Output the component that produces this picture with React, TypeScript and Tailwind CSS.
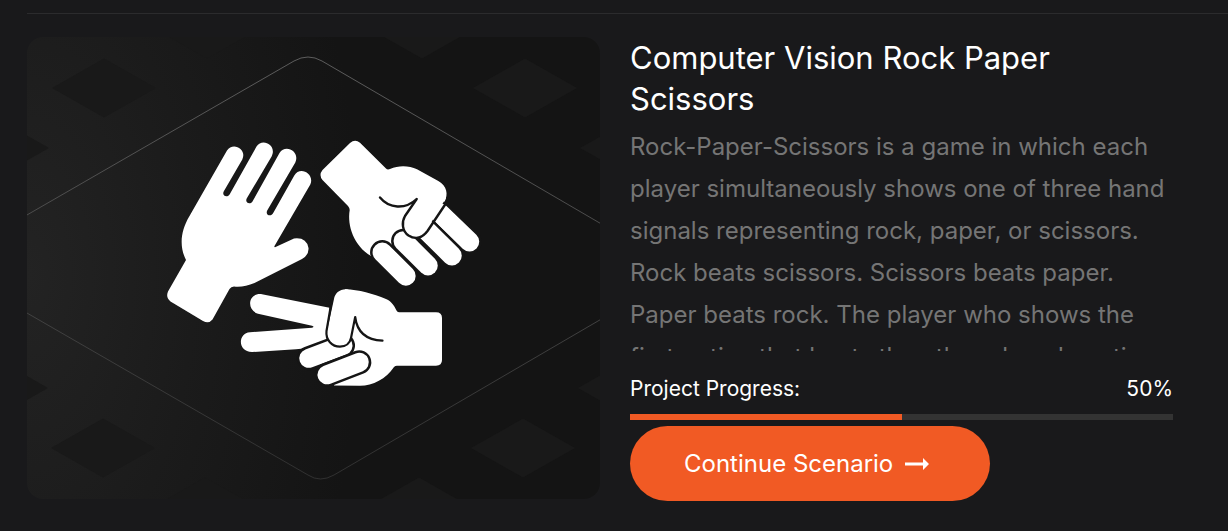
const DIAMONDS: [number, number][] = [
  [104, 88],
  [525, 88],
  [422, 29],
  [207, 29],
  [-3, 148],
  [632, 148],
  [103, 448],
  [523, 448],
  [419, 507],
  [205, 507],
  [-4, 388],
  [630, 388],
];

const INK = "#151515";

function Capsule({ d, width }: { d: string; width: number }) {
  return (
    <g fill="none" strokeLinecap="round">
      <path d={d} stroke={INK} strokeWidth={width + 5} />
      <path d={d} stroke="#fff" strokeWidth={width} />
    </g>
  );
}

function Paper() {
  return (
    <path
      fill="#fff"
      d="M186 260L168 291.500Q165.500 297.500 170.500 301.500L203 321Q209 324 212.500 319.500L229.500 289Q231 286.500 234 286.500Q244 287.500 254.500 283L302 259Q309 255 308.500 248Q306.500 237 294 238.500L275 247.200Q274 247 274.500 246L310.300 184.500C315 174 300 165.500 294.300 175.500L273.200 213C271 217.500 265 215 267.200 210.500L295.300 162.500C300.300 151.500 285.500 143.500 279.500 153L252.900 200.700C250.700 205.500 244.500 203 246.700 198.500L271.600 156.500C277.300 145.500 262.500 137.500 256.500 146.500L230 193.700C227.700 198.500 221.500 196 223.700 191.500L242.300 159.500C247.300 148.500 232.500 141.500 227 150.500L189.500 216C180 232 179.500 247 186 260Z"
    />
  );
}

function Rock() {
  return (
    <g>
      <path
        fill="#fff"
        d="M360 142.700L386 168.500Q387.500 170 390 169C399 165 409 165.500 417 169.300L438.300 181C447 186 448.500 194 444.500 202L426.700 232L400 256L371 256C354 246 347 226 349.700 210Q349.700 208 348 206L322.500 180Q318.500 175 322.500 170L350 143Q355 138.500 360 142.700Z"
      />
      <Capsule d="M439.700 213L469.500 241.700" width={19.5} />
      <Capsule d="M423 227L452 255.700" width={19.5} />
      <Capsule d="M403.300 241L428 265.700" width={19.5} />
      <Capsule d="M382.300 252.300L405.900 275.900" width={19.5} />
      <path
        fill="#fff"
        d="M446 198L426.700 230C422 238 415 239 409 235C402 231 401 222 405 216.500L416.700 199L430 185Z"
      />
      <path
        fill="none"
        stroke={INK}
        strokeWidth="2.400"
        strokeLinecap="round"
        strokeLinejoin="round"
        d="M445.500 204L427.500 231C422 238.500 415 239.500 408.500 235.500C402 231 401.500 222 405 216L416.700 199C405 210 389 208.500 380 197.500"
      />
    </g>
  );
}

function Scissors() {
  return (
    <g>
      <path
        fill="#fff"
        d="M262 294.200L329.500 307.700L327 341L306 347.500Q301 349 296 349.300L252 352C237.500 352 237.500 333 250 332.200L312 327.700Q315 327 312 325.700L258 313.800C246 310 248 292.500 262 294.200Z"
      />
      <path
        fill="#fff"
        d="M345 289.300C359 289.500 373 294 386 299C392 301.500 394.500 306.500 396.500 310.500Q397.200 312.200 399 312.200H436Q442 312.200 442 318V360Q442 365.700 436 365.700H397Q395.200 365.700 394 367C386 379 373 385.700 360 385.700L334 385.500L345 340L340 310Z"
      />
      <Capsule d="M308.800 358.300L343 345.500" width={19} />
      <Capsule d="M327 374.800L359.300 362.300" width={19} />
      <path
        fill="#fff"
        d="M348 289.400C340 288.500 335 293 334 299L327 331C325.500 340 332 346.500 340 346.500C346 346.500 350 343 351 338L355 316.700L366 300Z"
      />
      <path
        fill="none"
        stroke={INK}
        strokeWidth="2.200"
        strokeLinecap="round"
        strokeLinejoin="round"
        d="M332 299L326.500 331C325.500 340 332 346.700 340 346.700C346 346.700 350 343 351 338L355.200 317C357 332 366 340 382.500 340.700"
      />
    </g>
  );
}

function Artwork() {
  return (
    <svg
      viewBox="27 37 573 462"
      role="img"
      aria-label="Rock, paper and scissors hands"
      className="block w-full rounded-2xl"
    >
      <defs>
        <radialGradient
          id="glow"
          gradientUnits="userSpaceOnUse"
          cx="0"
          cy="0"
          r="1"
          gradientTransform="translate(27 275) scale(335 620)"
        >
          <stop offset="0" stopColor="#232323" />
          <stop offset="0.5" stopColor="#1b1b1b" />
          <stop offset="1" stopColor="#141414" />
        </radialGradient>
        <linearGradient id="edge" x1="0" y1="0" x2="0" y2="1">
          <stop offset="0" stopColor="#5c5c5c" />
          <stop offset="1" stopColor="#303030" />
        </linearGradient>
      </defs>
      <rect x="27" y="37" width="573" height="462" fill="url(#glow)" />
      {DIAMONDS.map(([x, y]) => (
        <path
          key={`${x},${y}`}
          d="M-52 0L0 -29.500L52 0L0 29.500Z"
          transform={`translate(${x} ${y})`}
          fill="#191919"
        />
      ))}
      <path
        fill="none"
        stroke="url(#edge)"
        d="M20 219L294 61Q308 53 322 61L610 229V314L334 475Q320 483 308 475L20 309"
      />
      <Paper />
      <Rock />
      <Scissors />
    </svg>
  );
}

export default function App() {
  const progress = 50;

  return (
    <main className="min-h-screen bg-[#19191b] pt-[13px] pl-[27px] font-['Inter',sans-serif] text-white">
      <hr className="border-t border-[#2b2b2d]" />
      <article className="grid grid-cols-[573fr_543fr] items-start gap-[30px] pt-[23px] pr-[55px] pb-[30px]">
        <Artwork />
        <div>
          <h2 className="text-[31px] leading-[41px]">Computer Vision Rock Paper Scissors</h2>
          <p className="mt-[7px] h-[225px] overflow-hidden text-[24px] leading-[42px] text-[#757575]">
            Rock-Paper-Scissors is a game in which each player simultaneously shows one of three hand
            signals representing rock, paper, or scissors. Rock beats scissors. Scissors beats paper.
            Paper beats rock. The player who shows the first option that beats the other player's
            option wins.
          </p>
          <div className="mt-[22px] flex justify-between text-[21px] leading-[32px]">
            <span id="progress-label">Project Progress:</span>
            <span>{progress}%</span>
          </div>
          <div
            role="progressbar"
            aria-labelledby="progress-label"
            aria-valuenow={progress}
            aria-valuemin={0}
            aria-valuemax={100}
            className="mt-[9px] h-[6px] bg-[#333333]"
          >
            <div className="h-full bg-[#f15a24]" style={{ width: `${progress}%` }} />
          </div>
          <button
            type="button"
            className="mt-[6px] flex h-[75px] w-[360px] max-w-full items-center justify-start gap-[12px] rounded-full bg-[#f15a24] px-[54px] text-[24px] whitespace-nowrap"
          >
            Continue Scenario
            <svg viewBox="0 0 24 12" className="h-[12px] w-[24px]" fill="#fff" aria-hidden="true">
              <path d="M0 4.500H18V0L24 6L18 12V7.500H0Z" />
            </svg>
          </button>
        </div>
      </article>
    </main>
  );
}
